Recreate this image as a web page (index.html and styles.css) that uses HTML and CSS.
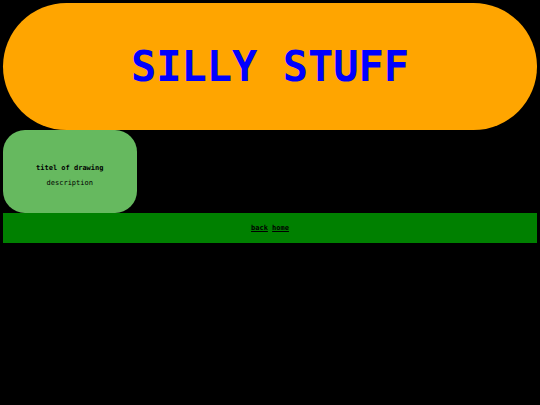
FILE: index.html
```html
<!DOCTYPE html>
<html lang="en">
<head>
    <meta charset="UTF-8">
    <meta name="viewport" content="width=device-width, initial-scale=1.0">
    <title>Silly Stuff</title>
    <link rel="stylesheet" href="styles.css">
</head>
<body>
    <header class="header">
        <h1>SILLY STUFF</h1>
    </header>

    <main class="row">
        <div class="card">
            <h2>titel of drawing</h2>
            <p>description</p>
        </div>
    </main>

    <footer class="footer">
        <a href="#"><u>back</u> <u>home</u></a>
    </footer>
</body>
</html>
```

FILE: styles.css
```css
* {
    box-sizing: border-box;
}

body {
    font-family: "DejaVu Sans Mono", monospace;
    font-size: 7px;
    line-height: 8px;
    background-color: black;
    margin: 0;
    padding: 3px;
    text-align: center;
}

.header {
    background-color: orange;
    color: blue;
    padding: 38px 20px;
    border-radius: 67px;
}

h1 {
    margin: 0;
    font-size: 42px;
    line-height: 51px;
}

.row {
    display: flex;
}

.card {
    width: 25%;
    padding: 34px 10px 26px;
    background-color: #66b95f;
    border-radius: 22px;
}

h2 {
    margin: 0 0 7px;
    font-size: 7px;
}

p {
    margin: 0;
}

.footer {
    background-color: green;
    padding: 11px;
}

.footer a {
    color: black;
    font-weight: bold;
    text-decoration: none;
}
```
